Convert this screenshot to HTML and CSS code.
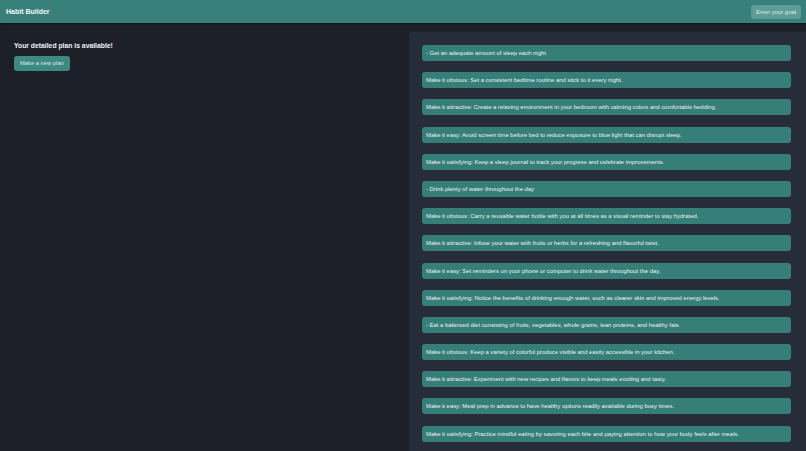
FILE: index.html
```html
<!DOCTYPE html>
<html lang="en">
<head>
    <meta charset="UTF-8">
    <meta name="viewport" content="width=device-width, initial-scale=1.0">
    <title>Habit Builder</title>
    <link rel="stylesheet" href="styles.css">
</head>
<body>
    <header class="topbar">
        <h1 class="brand">Habit Builder</h1>
        <button class="goal-btn">Enter your goal</button>
    </header>

    <main class="layout">
        <section class="intro">
            <h2>Your detailed plan is available!</h2>
            <button class="new-plan-btn">Make a new plan</button>
        </section>

        <section class="plan">
            <div class="step">- Get an adequate amount of sleep each night</div>
            <div class="step">Make it obvious: Set a consistent bedtime routine and stick to it every night.</div>
            <div class="step">Make it attractive: Create a relaxing environment in your bedroom with calming colors and comfortable bedding.</div>
            <div class="step">Make it easy: Avoid screen time before bed to reduce exposure to blue light that can disrupt sleep.</div>
            <div class="step">Make it satisfying: Keep a sleep journal to track your progress and celebrate improvements.</div>
            <div class="step">- Drink plenty of water throughout the day</div>
            <div class="step">Make it obvious: Carry a reusable water bottle with you at all times as a visual reminder to stay hydrated.</div>
            <div class="step">Make it attractive: Infuse your water with fruits or herbs for a refreshing and flavorful twist.</div>
            <div class="step">Make it easy: Set reminders on your phone or computer to drink water throughout the day.</div>
            <div class="step">Make it satisfying: Notice the benefits of drinking enough water, such as clearer skin and improved energy levels.</div>
            <div class="step">- Eat a balanced diet consisting of fruits, vegetables, whole grains, lean proteins, and healthy fats</div>
            <div class="step">Make it obvious: Keep a variety of colorful produce visible and easily accessible in your kitchen.</div>
            <div class="step">Make it attractive: Experiment with new recipes and flavors to keep meals exciting and tasty.</div>
            <div class="step">Make it easy: Meal prep in advance to have healthy options readily available during busy times.</div>
            <div class="step">Make it satisfying: Practice mindful eating by savoring each bite and paying attention to how your body feels after meals.</div>
        </section>
    </main>
</body>
</html>
```

FILE: styles.css
```css
body {
    font-family: "Liberation Sans", Arial, sans-serif;
    background-color: #1d2029;
    color: #e8eef0;
    margin: 0;
    padding: 0;
    overflow: hidden;
}
.topbar {
    background: #38807a;
    height: 23px;
    display: flex;
    align-items: center;
    justify-content: space-between;
    padding: 0 5px 0 6px;
    box-shadow: 0 1px 2px rgba(0, 0, 0, 0.4);
}
.brand {
    font-size: 7px;
    font-weight: 600;
    margin: 0;
    color: #f2f6f6;
}
.goal-btn {
    background: #5f9c97;
    color: #dce9e8;
    border: none;
    border-radius: 3px;
    font-family: inherit;
    font-size: 5.9px;
    height: 14px;
    padding: 0 5px;
}
.layout {
    display: grid;
    grid-template-columns: 409px 1fr;
    padding-top: 9px;
}
.intro {
    padding: 10px 14px;
}
.intro h2 {
    font-size: 6.8px;
    font-weight: bold;
    margin: 0 0 2px 0;
    color: #eef2f4;
}
.new-plan-btn {
    background: #3d8a83;
    color: #dbe9e8;
    border: none;
    border-radius: 3px;
    font-family: inherit;
    font-size: 5.8px;
    height: 15px;
    padding: 0 6px;
}
.plan {
    background: #262c38;
    border-radius: 4px 0 0 0;
    padding: 13px 15px 20px 13px;
    display: flex;
    flex-direction: column;
    gap: 11.2px;
}
.step {
    background: #367f79;
    border-radius: 3px;
    height: 16px;
    display: flex;
    align-items: center;
    padding: 0 4px;
    font-size: 5.9px;
    color: #eaf2f1;
}
```
